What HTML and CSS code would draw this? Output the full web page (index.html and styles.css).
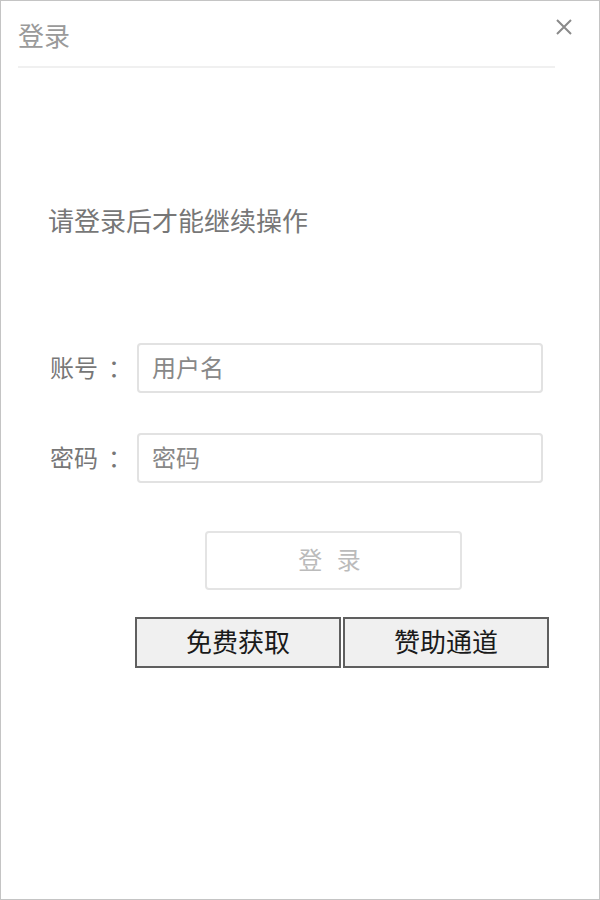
FILE: index.html
```html
<!DOCTYPE html>
<html lang="zh-CN">
<head>
    <meta charset="UTF-8">
    <meta name="viewport" content="width=device-width, initial-scale=1.0">
    <title>登录</title>
    <link rel="stylesheet" href="styles.css">
</head>
<body>
    <div class="dialog">
        <div class="header">
            <span class="title">登录</span>
        </div>
        <button class="close" aria-label="关闭">
            <svg width="16" height="16" viewBox="0 0 16 16">
                <path d="M1 1 L15 15 M15 1 L1 15" stroke="#8a8a8a" stroke-width="2" fill="none"/>
            </svg>
        </button>

        <p class="message">请登录后才能继续操作</p>

        <div class="form">
            <div class="row">
                <label for="user">账号<span class="colon">：</span></label>
                <input type="text" id="user" placeholder="用户名">
            </div>
            <div class="row">
                <label for="pass">密码<span class="colon">：</span></label>
                <input type="password" id="pass" placeholder="密码">
            </div>
            <button class="login">登 录</button>
        </div>

        <div class="actions">
            <button class="action">免费获取</button>
            <button class="action">赞助通道</button>
        </div>
    </div>
</body>
</html>
```

FILE: styles.css
```css
html, body {
    margin: 0;
    padding: 0;
    background: #fff;
}
body {
    font-family: "Noto Sans CJK SC", "Noto Sans", sans-serif;
}
.dialog {
    position: relative;
    width: 600px;
    height: 900px;
    box-sizing: border-box;
    border: 1px solid #c4c4c4;
    background: #fff;
}
.header {
    height: 63px;
    margin: 0 44px 0 17px;
    padding-top: 2px;
    border-bottom: 2px solid #f0f0f0;
    display: flex;
    align-items: center;
}
.title {
    font-size: 26px;
    color: #9a9a9a;
    line-height: 1;
}
.close {
    position: absolute;
    top: 18px;
    left: 555px;
    width: 16px;
    height: 16px;
    padding: 0;
    border: none;
    background: none;
    cursor: pointer;
}
.close svg {
    display: block;
}
.message {
    margin: 137px 0 0 47px;
    font-size: 26px;
    line-height: 30px;
    color: #777;
}
.form {
    margin-top: 108px;
    padding-left: 49px;
}
.row {
    display: flex;
    align-items: center;
    margin-bottom: 40px;
}
.row:last-of-type {
    margin-bottom: 48px;
}
label {
    width: 87px;
    font-size: 24px;
    color: #777;
    padding-bottom: 4px;
}
.colon {
    margin-left: 10px;
}
input {
    width: 406px;
    height: 50px;
    box-sizing: border-box;
    border: 2px solid #e2e2e2;
    border-radius: 4px;
    padding: 0 13px 4px;
    font-family: inherit;
    font-size: 24px;
    color: #555;
    outline: none;
}
input::placeholder {
    color: #888;
}
.login {
    display: block;
    margin-left: 155px;
    width: 257px;
    height: 59px;
    padding: 0 8px 4px 0;
    border: 2px solid #e4e4e4;
    border-radius: 4px;
    background: #fff;
    font-family: inherit;
    font-size: 24px;
    word-spacing: 9px;
    color: #bbb;
    cursor: pointer;
}
.actions {
    display: flex;
    gap: 2px;
    margin: 27px 0 0 134px;
}
.action {
    width: 206px;
    height: 51px;
    padding: 0 0 4px;
    border: 2px solid #5f5f5f;
    background: #f0f0f0;
    font-family: inherit;
    font-size: 26px;
    color: #1a1a1a;
    cursor: pointer;
}
```
